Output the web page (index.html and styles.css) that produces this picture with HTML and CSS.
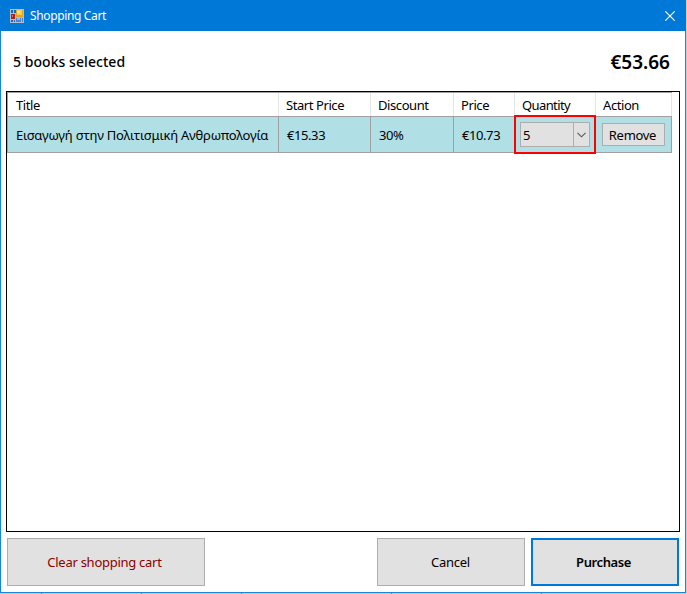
FILE: index.html
```html
<!DOCTYPE html>
<html lang="en">
<head>
<meta charset="utf-8">
<title>Shopping Cart</title>
<link rel="stylesheet" href="styles.css">
</head>
<body>
<div class="window">
  <header class="titlebar">
    <svg class="app-icon" width="14" height="14" viewBox="0 0 14 14" shape-rendering="crispEdges">
      <path fill="#b4bdca" d="M0 0h14v14H0z"/>
      <path fill="#1b69bd" d="M1 1h2v3H1zM4 1h2v3H4zM1 11h2v2H1zM4 11h1v2H4z"/>
      <path fill="#dfa522" d="M6 1h7v7H6z"/><path fill="#f9cf4d" d="M7 1h5v5H7z"/><path fill="#ffeaa0" d="M7 2h3v2H7z"/>
      <path fill="#a3231d" d="M1 5h4v5H1z"/><path fill="#dc7368" d="M2 6h1v2H2z"/>
      <path fill="#4c84d8" d="M6 9h5v4H6zM12 9h1v4h-1z"/><path fill="#94b9ee" d="M7 9h3v2H7z"/>
    </svg>
    <span class="caption">Shopping Cart</span>
    <svg class="close" width="10" height="10" viewBox="0 0 10 10"><path d="M.3.3l9.4 9.4M9.7.3L.3 9.7" stroke="#fff" stroke-width="1.1"/></svg>
  </header>
  <section class="summary">
    <span class="count">5 books selected</span>
    <span class="total">€53.66</span>
  </section>
  <main class="grid-box">
    <div class="row head">
      <div class="cell"><span>Title</span></div>
      <div class="cell"><span>Start Price</span></div>
      <div class="cell"><span>Discount</span></div>
      <div class="cell"><span>Price</span></div>
      <div class="cell"><span class="tight">Quantity</span></div>
      <div class="cell"><span>Action</span></div>
    </div>
    <div class="row item">
      <div class="cell"><span class="book">Εισαγωγή στην Πολιτισμική Ανθρωπολογία</span></div>
      <div class="cell"><span>€15.33</span></div>
      <div class="cell"><span>30%</span></div>
      <div class="cell"><span>€10.73</span></div>
      <div class="cell control quantity">
        <div class="combo"><span>5</span><i><svg width="9" height="6" viewBox="0 0 9 6"><path d="M.5.8l4 4 4-4" fill="none" stroke="#555" stroke-width="1.1"/></svg></i></div>
        <div class="highlight"></div>
      </div>
      <div class="cell control"><button class="remove"><span>Remove</span></button></div>
    </div>
  </main>
  <footer class="actions">
    <button class="btn clear"><span>Clear shopping cart</span></button>
    <button class="btn cancel"><span>Cancel</span></button>
    <button class="btn purchase"><span>Purchase</span></button>
  </footer>
</div>
<div class="backdrop-edge"><i></i><i></i><i></i><i></i><i></i></div>
</body>
</html>
```
FILE: styles.css
```css
* { box-sizing: border-box; }
body {
  margin: 0;
  width: 687px;
  height: 594px;
  overflow: hidden;
  background: #c3cfdb;
  font: 13px/18px "Noto Sans", "Open Sans", sans-serif;
  color: #000;
}
button { font: inherit; color: inherit; padding: 0; border-radius: 0; }
.window {
  width: 686px;
  height: 593px;
  display: flex;
  flex-direction: column;
  background: #fff;
  border: 1px solid #1a83da;
  border-top: 0;
}
.titlebar {
  height: 31px;
  margin: 0 -1px;
  padding: 0 11px 0 10px;
  display: flex;
  align-items: center;
  background: #0078d7;
  color: #fff;
  font-size: 12px;
}
.app-icon { margin-right: 6px; }
.caption { letter-spacing: -0.36px; }
.close { margin-left: auto; }
.summary {
  height: 60px;
  padding: 2px 15px 0 12px;
  display: flex;
  align-items: center;
  justify-content: space-between;
  font-weight: 500;
}
.count { font-size: 14px; letter-spacing: 0.05px; }
.total { font-size: 19px; font-weight: 600; }
.grid-box {
  width: 674px;
  height: 441px;
  margin-left: 5px;
  border: 1px solid #000;
}
.row {
  display: grid;
  grid-template-columns: 271px 92px 83px 61px 81px 76px;
  width: 665px;
  border-left: 1px solid #a0a0a0;
}
.head { height: 25px; border-top: 1px solid #a0a0a0; border-bottom: 1px solid #a0a0a0; letter-spacing: -0.42px; }
.head .tight { letter-spacing: -0.6px; }
.head .cell { border-right: 1px solid #e5e5e5; padding-left: 7px; }
.item { height: 36px; background: #b0e0e6; border-bottom: 1px solid #a0a0a0; letter-spacing: -0.42px; }
.cell { display: flex; align-items: center; padding-left: 8px; white-space: nowrap; }
.book { letter-spacing: -0.23px; }
.item .cell { border-right: 1px solid #a0a0a0; }
.row .cell:first-child { padding-left: 8px; }
.item .control { padding-left: 6px; }
.quantity { position: relative; }
.item .quantity { padding-left: 5px; }
.combo {
  display: flex;
  width: 70px;
  height: 25px;
  background: #e1e1e1;
  border: 1px solid #adadad;
}
.combo span { flex: 1; padding-left: 2px; line-height: 24px; }
.combo i {
  width: 16px;
  border-left: 1px solid #adadad;
  display: flex;
  align-items: center;
  justify-content: center;
}
.highlight { position: absolute; left: -1px; top: -2px; width: 82px; height: 39px; border: 2px solid #f00; }
.remove { width: 63px; height: 23px; background: #e1e1e1; border: 1px solid #adadad; letter-spacing: -0.3px; padding-right: 2px; }
.actions { display: flex; padding: 6px 6px 0; }
.btn { width: 148px; height: 48px; background: #e1e1e1; border: 1px solid #adadad; letter-spacing: -0.27px; padding-right: 1px; }
.clear { width: 198px; color: #8b0000; padding-right: 3px; }
.cancel { margin-left: auto; }
.purchase { margin-left: 6px; border: 2px solid #0078d7; font-weight: 600; letter-spacing: -0.4px; padding-right: 3px; }
/* Column lines of the window behind the dialog */
.backdrop-edge {
  display: grid;
  grid-template-columns: 42px 100px 100px 150px 150px;
  height: 1px;
}
.backdrop-edge i { border-right: 1px solid #6d8497; }
```
